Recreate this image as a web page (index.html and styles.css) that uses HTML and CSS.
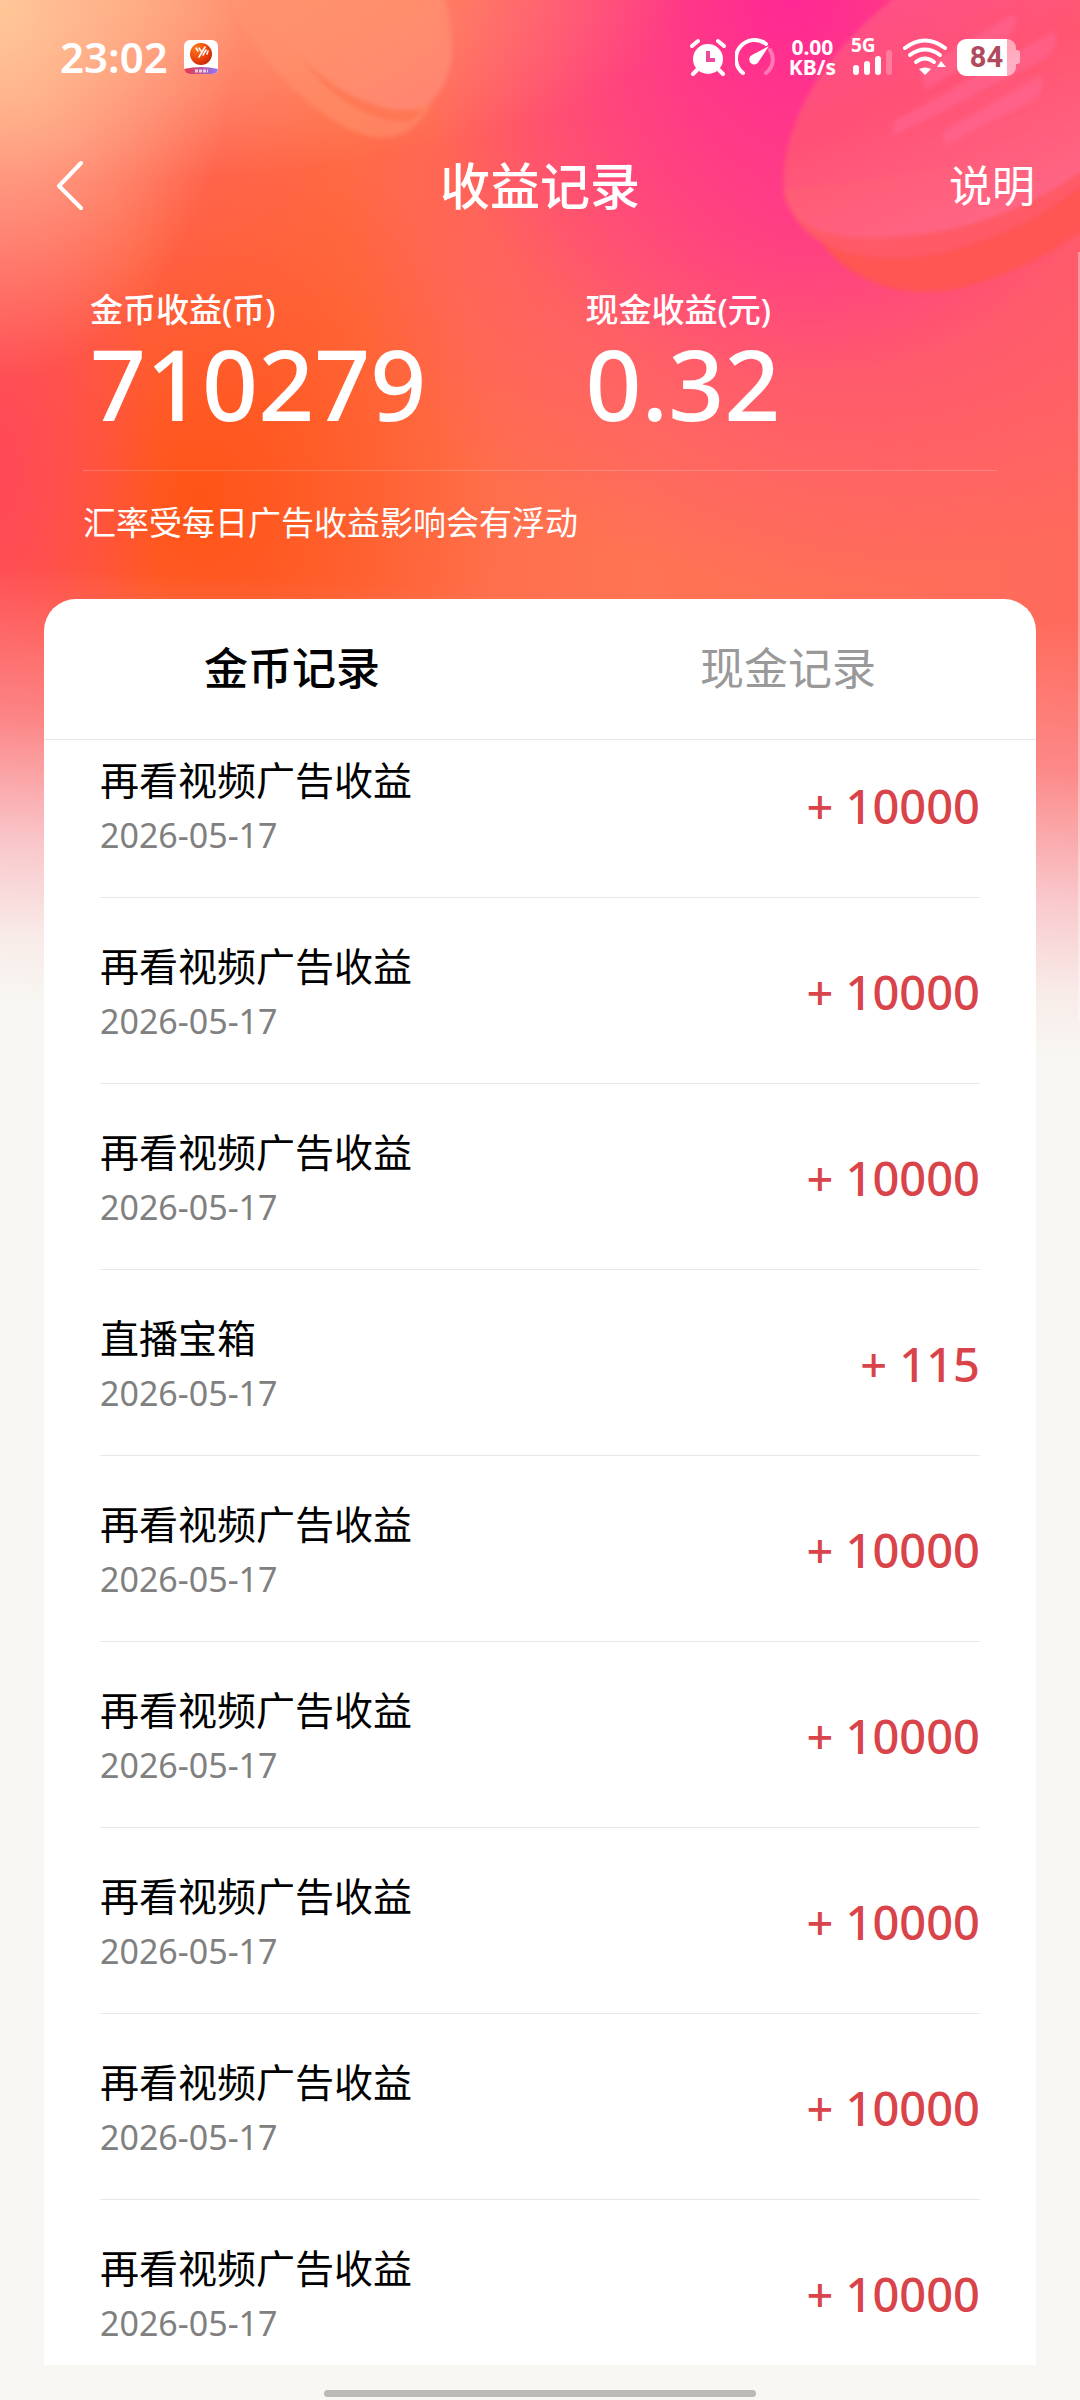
FILE: index.html
```html
<!DOCTYPE html>
<html lang="zh-CN">
<head>
    <meta charset="UTF-8">
    <meta name="viewport" content="width=device-width, initial-scale=1">
    <title>收益记录</title>
    <link rel="stylesheet" href="styles.css">
</head>
<body>
    <!-- gold coins behind the header -->
    <svg class="coins" viewBox="0 0 1080 320" preserveAspectRatio="xMaxYMin slice" aria-hidden="true">
        <defs>
            <linearGradient id="coinLeft" x1="0" y1="0" x2="1" y2="1">
                <stop offset="0" stop-color="#ff9a70" stop-opacity="0.2"/>
                <stop offset="1" stop-color="#ff8474" stop-opacity="0.9"/>
            </linearGradient>
            <linearGradient id="coinRight" x1="0" y1="0" x2="0.5" y2="1">
                <stop offset="0" stop-color="#ff5c90" stop-opacity="0.7"/>
                <stop offset="0.5" stop-color="#ff5672" stop-opacity="0.8"/>
                <stop offset="1" stop-color="#ff6684"/>
            </linearGradient>
            <filter id="soft"><feGaussianBlur stdDeviation="2"/></filter>
        </defs>
        <g filter="url(#soft)">
            <path d="M225 -10C250 50 300 105 350 130C385 145 410 138 428 110L452 60L440 -10Z" fill="#ff9470" fill-opacity="0.5"/>
            <path d="M300 55C330 90 370 112 425 110L410 122C370 122 330 100 300 55Z" fill="#ff6a48" fill-opacity="0.5"/>
            <path d="M250 -10C280 50 345 100 390 109C425 114 450 95 452 50C453 20 447 5 442 -10Z" fill="url(#coinLeft)"/>
        </g>
        <g filter="url(#soft)">
            <path d="M820 240C850 285 910 300 960 288C1010 276 1050 255 1090 225V170Z" fill="#ff5452"/>
            <path d="M784 190C795 245 850 262 910 258C980 250 1040 220 1090 180V150Z" fill="#ff5a66"/>
            <path d="M905 -10C830 45 778 120 784 195C795 240 860 243 930 233C1000 220 1050 195 1090 165V-10Z" fill="url(#coinRight)"/>
        </g>
        <g filter="url(#soft)" fill="#ff6a98" fill-opacity="0.45">
            <path d="M920 70L1012 15C1022 20 1010 40 995 47L925 90Z"/>
            <path d="M893 122L1052 32C1062 35 1055 52 1042 60L893 136Z"/>
            <path d="M942 132L1038 76C1048 80 1042 98 1028 104L945 146Z"/>
        </g>
    </svg>

    <div class="status-bar">
        <div class="status-left">
            <span class="clock">23:02</span>
            <svg class="app-icon" viewBox="0 0 34 34">
                <defs>
                    <radialGradient id="ball" cx="0.3" cy="0.25" r="0.9">
                        <stop offset="0" stop-color="#ff7a1a"/>
                        <stop offset="0.6" stop-color="#e8400c"/>
                        <stop offset="1" stop-color="#c02000"/>
                    </radialGradient>
                    <linearGradient id="ribbon">
                        <stop offset="0" stop-color="#f03540"/>
                        <stop offset="1" stop-color="#8a78ff"/>
                    </linearGradient>
                    <clipPath id="appClip"><rect width="34" height="34" rx="6"/></clipPath>
                </defs>
                <g clip-path="url(#appClip)">
                    <rect width="34" height="34" fill="#fff"/>
                    <path d="M0 29Q17 25 34 29V34H0Z" fill="url(#ribbon)"/>
                    <path d="M11 31H24" stroke="#fff" stroke-width="3" stroke-dasharray="3 1" opacity="0.7"/>
                </g>
                <circle cx="17" cy="14" r="11" fill="url(#ball)"/>
                <path d="M12 8L14 11M15 8L17 11M21 7L15 17M22 10L19 15M24 11L23 14" stroke="#fff" stroke-width="1.500" stroke-linecap="round" fill="none"/>
            </svg>
        </div>
        <div class="status-right">
            <svg class="icon-alarm" viewBox="0 0 36 38">
                <circle cx="18" cy="21" r="15" fill="#fff"/>
                <path d="M2 8L8 3M34 8L28 3" stroke="#fff" stroke-width="4" stroke-linecap="round"/>
                <path d="M7 32L3 36M29 32L33 36" stroke="#fff" stroke-width="4" stroke-linecap="round"/>
                <path d="M18 13V22H25" stroke="#f0489a" stroke-width="4" fill="none"/>
            </svg>
            <svg class="icon-speed" viewBox="0 0 40 38">
                <path d="M8 35A17 17 0 1 1 31 6" stroke="#fff" stroke-width="4" fill="none" stroke-linecap="round"/>
                <path d="M35 12A17 17 0 0 1 31 35" stroke="#fff" stroke-opacity="0.35" stroke-width="4" fill="none" stroke-linecap="round"/>
                <path d="M34 8L24 23A5 5 0 1 1 17 17Z" fill="#fff"/>
            </svg>
            <span class="net-speed">0.00<br>KB/s</span>
            <div class="signal">
                <span class="signal-type">5G</span>
                <svg class="signal-bars" viewBox="0 0 42 26" fill="#fff">
                    <rect x="2" y="15" width="6" height="10" rx="3"/>
                    <rect x="13" y="11" width="6" height="14" rx="3"/>
                    <rect x="24" y="6" width="6" height="19" rx="3"/>
                    <rect x="35" y="0" width="6" height="25" rx="3" fill-opacity="0.25"/>
                </svg>
            </div>
            <svg class="icon-wifi" viewBox="0 0 44 38">
                <g stroke="#fff" stroke-width="4" fill="none" stroke-linecap="round">
                    <path d="M2 10Q22 -5 42 10"/>
                    <path d="M7 17Q22 6 37 17"/>
                    <path d="M13 24Q22 17 31 24"/>
                </g>
                <path d="M16 31Q22 28 28 31L22 37Z" fill="#fff"/>
                <path d="M34 29L38 23L43 29Z" fill="#fff"/>
            </svg>
            <div class="battery"><span class="battery-body">84</span></div>
        </div>
    </div>

    <header class="nav-bar">
        <button type="button" class="back" aria-label="返回">
            <svg viewBox="0 0 28 50"><path d="M25 2L3 25L25 47" stroke="#fff" stroke-width="4" fill="none" stroke-linecap="round" stroke-linejoin="round"/></svg>
        </button>
        <h1>收益记录</h1>
        <a class="help" href="#">说明</a>
    </header>

    <section class="summary">
        <div class="totals">
            <div>
                <p class="label">金币收益(币)</p>
                <p class="total">710279</p>
            </div>
            <div>
                <p class="label">现金收益(元)</p>
                <p class="total">0.32</p>
            </div>
        </div>
        <p class="note">汇率受每日广告收益影响会有浮动</p>
    </section>

    <main class="card">
        <div class="tabs" role="tablist">
            <button type="button" class="tab active" role="tab" aria-selected="true">金币记录</button>
            <button type="button" class="tab" role="tab" aria-selected="false">现金记录</button>
        </div>
        <ul class="records">
            <li class="record">
                <div><p class="name">再看视频广告收益</p><p class="date">2026-05-17</p></div>
                <span class="amount">+ 10000</span>
            </li>
            <li class="record">
                <div><p class="name">再看视频广告收益</p><p class="date">2026-05-17</p></div>
                <span class="amount">+ 10000</span>
            </li>
            <li class="record">
                <div><p class="name">再看视频广告收益</p><p class="date">2026-05-17</p></div>
                <span class="amount">+ 10000</span>
            </li>
            <li class="record">
                <div><p class="name">直播宝箱</p><p class="date">2026-05-17</p></div>
                <span class="amount">+ 115</span>
            </li>
            <li class="record">
                <div><p class="name">再看视频广告收益</p><p class="date">2026-05-17</p></div>
                <span class="amount">+ 10000</span>
            </li>
            <li class="record">
                <div><p class="name">再看视频广告收益</p><p class="date">2026-05-17</p></div>
                <span class="amount">+ 10000</span>
            </li>
            <li class="record">
                <div><p class="name">再看视频广告收益</p><p class="date">2026-05-17</p></div>
                <span class="amount">+ 10000</span>
            </li>
            <li class="record">
                <div><p class="name">再看视频广告收益</p><p class="date">2026-05-17</p></div>
                <span class="amount">+ 10000</span>
            </li>
            <li class="record">
                <div><p class="name">再看视频广告收益</p><p class="date">2026-05-17</p></div>
                <span class="amount">+ 10000</span>
            </li>
        </ul>
    </main>

    <div class="home-bar"></div>
</body>
</html>
```
FILE: styles.css
```css
* {
    box-sizing: border-box;
    margin: 0;
    padding: 0;
}

body {
    position: relative;
    display: flex;
    flex-direction: column;
    height: 100vh;
    overflow: hidden;
    font-family: "Noto Sans", "Noto Sans CJK SC", sans-serif;
    color: #fff;
    background:
        linear-gradient(183deg, rgba(251, 140, 145, 0) 620px, rgba(251, 150, 156, 0.7) 770px, #f9c8cc 900px, #f8ebe8 990px, #f8f7f3 1060px),
        radial-gradient(ellipse 240px 380px at 0 0, #ffc898, rgba(255, 170, 130, 0)),
        radial-gradient(ellipse 560px 180px at 120px 0, rgba(255, 160, 125, 0.9), rgba(255, 150, 115, 0)),
        radial-gradient(ellipse 160px 380px at 0 470px, #ff4858, rgba(255, 72, 88, 0)),
        radial-gradient(ellipse 380px 380px at 790px 0, #ff2894, rgba(255, 60, 120, 0)),
        radial-gradient(ellipse 480px 380px at 820px 210px, rgba(255, 70, 128, 0.9), rgba(255, 85, 110, 0)),
        radial-gradient(ellipse 300px 400px at 200px 500px, #ff5416, rgba(255, 94, 50, 0)),
        radial-gradient(ellipse 300px 330px at 60px 220px, rgba(255, 104, 108, 0.8), rgba(255, 104, 100, 0)),
        linear-gradient(to right, #ff6458 0, #ff6a44 30%, #ff7454 60%, #ff6a5c 100%);
    background-color: #f8f7f3;
}

/* scroll indicator on the window edge */
body::after {
    content: "";
    position: absolute;
    top: 252px;
    right: 0;
    width: 2px;
    height: 770px;
    background: rgba(255, 255, 255, 0.35);
}

button {
    border: none;
    background: none;
    font-family: inherit;
    color: inherit;
}

.coins {
    position: absolute;
    top: 0;
    left: 0;
    width: 100%;
    height: 320px;
    z-index: -1;
}

/* status bar */
.status-bar {
    display: flex;
    justify-content: space-between;
    align-items: center;
    height: 114px;
    padding: 0 60px;
}

.status-left,
.status-right {
    display: flex;
    align-items: center;
}

.clock {
    font-family: "Noto Sans", sans-serif;
    font-size: 42px;
    font-weight: 600;
    line-height: 48px;
}

.app-icon {
    width: 34px;
    height: 34px;
    margin-left: 16px;
}

.icon-alarm {
    width: 36px;
    height: 38px;
    margin-right: 9px;
}

.icon-speed {
    width: 40px;
    height: 38px;
    margin-right: 14px;
}

.net-speed {
    font-size: 21px;
    font-weight: 700;
    line-height: 20px;
    text-align: center;
    margin-right: 15px;
}

.signal {
    display: flex;
    flex-direction: column;
    width: 42px;
    margin-right: 10px;
}

.signal-type {
    font-size: 19px;
    font-weight: 700;
    line-height: 14px;
}

.signal-bars {
    width: 42px;
    height: 26px;
    margin-top: -2px;
}

.icon-wifi {
    width: 44px;
    height: 38px;
    margin-right: 10px;
}

.battery {
    display: flex;
    align-items: center;
}

.battery::after {
    content: "";
    width: 4px;
    height: 14px;
    border-radius: 0 3px 3px 0;
    background: rgba(255, 255, 255, 0.5);
}

.battery-body {
    width: 59px;
    height: 37px;
    border-radius: 9px;
    background: linear-gradient(to right, #fff 84%, rgba(255, 255, 255, 0.5) 84%);
    font-family: Roboto, sans-serif;
    font-size: 29px;
    font-weight: 700;
    line-height: 37px;
    text-align: center;
    color: #b04a5c;
}

/* title row */
.nav-bar {
    display: grid;
    grid-template-columns: 1fr auto 1fr;
    align-items: center;
    height: 144px;
    padding: 0 45px;
}

.back {
    justify-self: start;
    width: 50px;
    height: 50px;
}

.back svg {
    display: block;
    width: 28px;
    height: 50px;
    margin: 0 11px;
}

h1 {
    padding-bottom: 6px;
    font-size: 50px;
    font-weight: 500;
}

.help {
    justify-self: end;
    padding-bottom: 6px;
    font-size: 43px;
    color: #fff;
    text-decoration: none;
}

/* totals */
.summary {
    height: 341px;
    padding: 28px 44px 0;
}

.totals {
    display: grid;
    grid-template-columns: 1fr 1fr;
    height: 184px;
    padding-left: 1px;
}

.totals > div {
    padding-left: 45px;
}

.label {
    font-size: 33px;
    font-weight: 500;
    line-height: 48px;
}

.total {
    font-size: 98px;
    font-weight: 500;
    line-height: 98px;
}

.note {
    margin: 0 39px;
    padding-top: 28px;
    border-top: 1px solid rgba(255, 255, 255, 0.2);
    font-size: 33px;
    line-height: 48px;
}

/* records card */
.card {
    display: flex;
    flex-direction: column;
    flex: 1;
    min-height: 0;
    margin: 0 44px;
    border-radius: 32px 32px 0 0;
    background: #fff;
    overflow: hidden;
}

.tabs {
    display: grid;
    grid-template-columns: 1fr 1fr;
    height: 141px;
    border-bottom: 1px solid #e6e6e6;
}

.tab {
    padding-bottom: 6px;
    font-size: 44px;
    color: #999;
}

.tab.active {
    font-weight: 500;
    color: #000;
}

.records {
    flex: 1;
    overflow: hidden;
    padding: 0 56px;
    list-style: none;
}

.record {
    display: flex;
    justify-content: space-between;
    align-items: flex-start;
    height: 186px;
    padding-top: 40px;
    border-bottom: 1px solid #e8e8e8;
}

/* list is scrolled a little under the tabs */
.record:first-child {
    margin-top: -28px;
}

.name {
    font-size: 39px;
    line-height: 56px;
    color: #000;
}

.date {
    font-size: 34px;
    line-height: 54px;
    color: #808080;
}

.amount {
    font-size: 47px;
    font-weight: 500;
    line-height: 108px;
    color: #d9434a;
}

.home-bar {
    flex: none;
    width: 40%;
    height: 7px;
    margin: 25px auto 3px;
    border-radius: 4px;
    background: #bbbab7;
}
```
